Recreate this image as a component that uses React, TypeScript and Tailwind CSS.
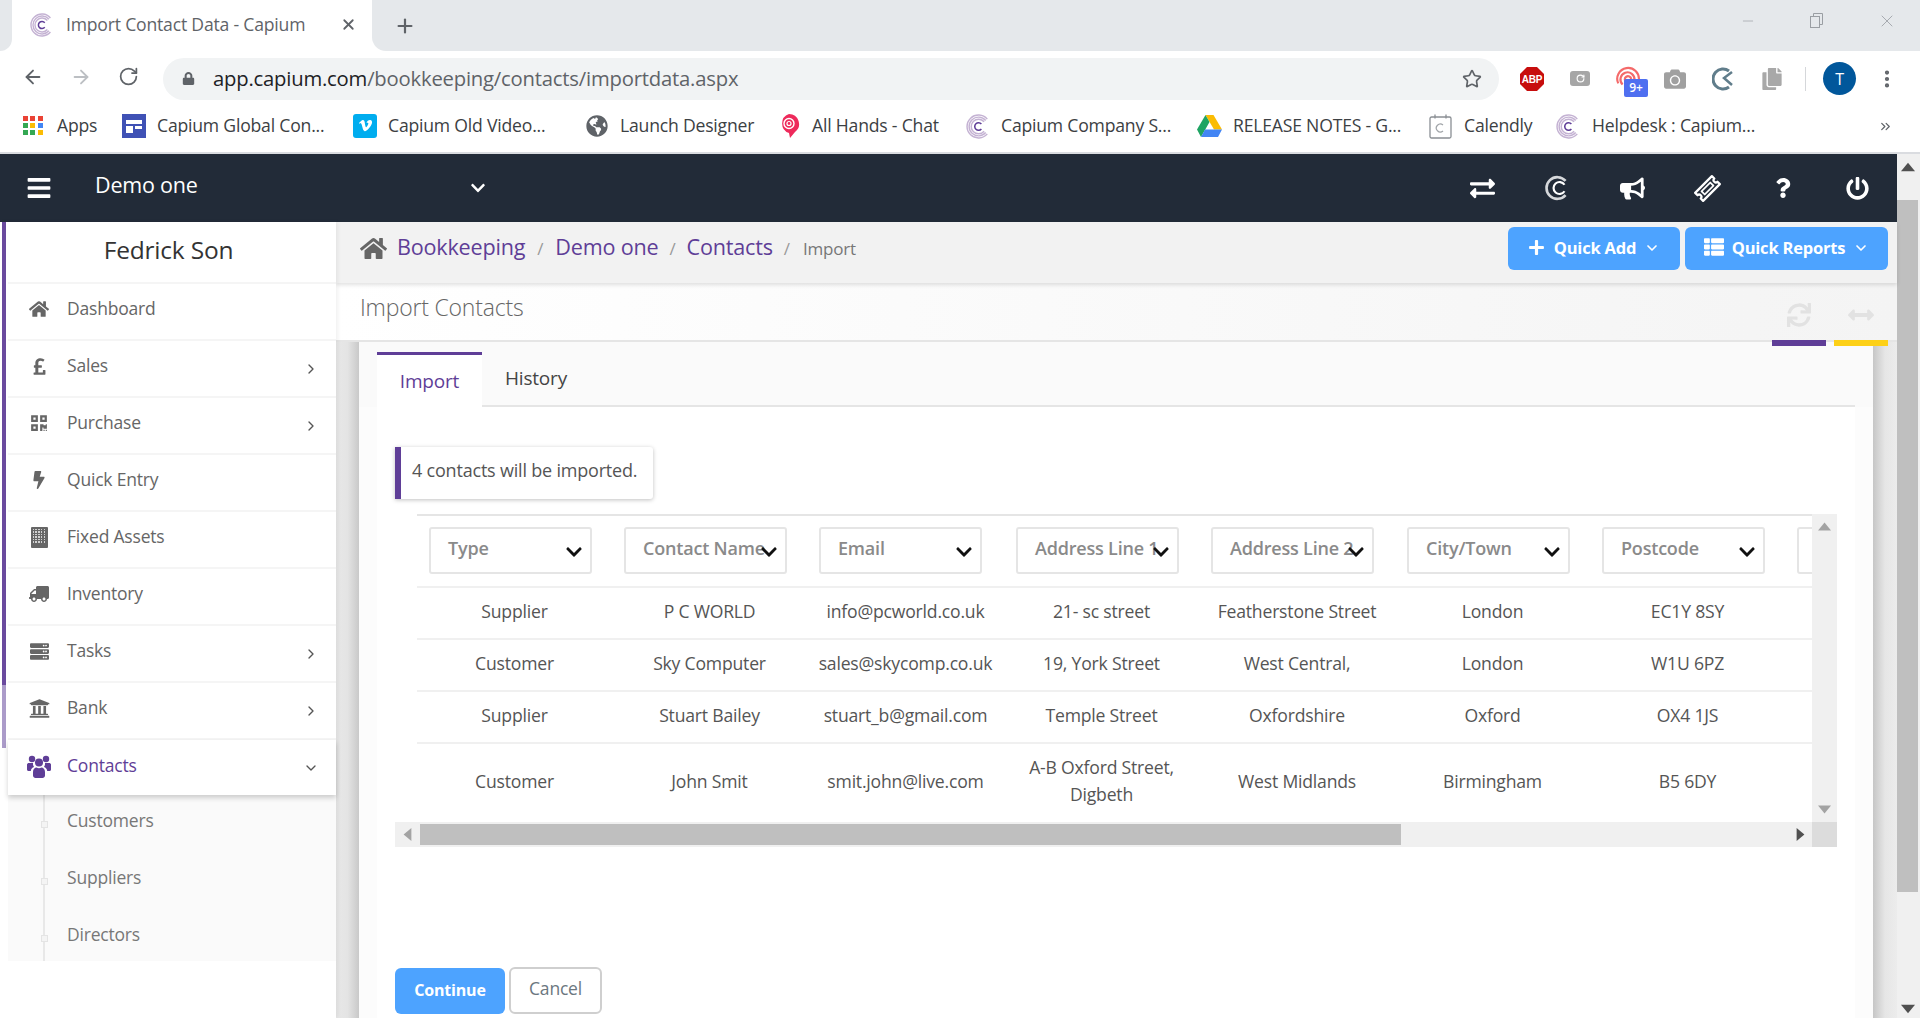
import React from 'react';
import {
  FaHome, FaPoundSign, FaQrcode, FaBolt, FaTruck, FaServer, FaUniversity, FaChevronDown,
  FaExchangeAlt, FaBullhorn, FaQuestion, FaPowerOff, FaPlus, FaThList, FaSync, FaArrowsAltH,
  FaLock, FaVimeoV, FaGlobeAmericas, FaCamera, FaCopy, FaBars,
} from 'react-icons/fa';
import { ArrowLeft, ArrowRight, RotateCw, Star, X, Plus, EllipsisVertical, ChevronRight, ChevronDown, Minus, ChevronsRight } from 'lucide-react';

function CLogo({ size = 24, outer = '#c4b2d3', inner = '#5f3e97' }: { size?: number; outer?: string; inner?: string }) {
  const arc = (r: number) => {
    const a = (40 * Math.PI) / 180;
    const x = 12 + r * Math.cos(a);
    const dy = r * Math.sin(a);
    return `M${x} ${12 - dy}A${r} ${r} 0 1 0 ${x} ${12 + dy}`;
  };
  return (
    <svg width={size} height={size} viewBox="0 0 24 24" fill="none" strokeLinecap="butt">
      <path d={arc(11)} stroke={outer} strokeWidth="1.4" />
      <path d={arc(9)} stroke={outer} strokeWidth="1.4" />
      <path d={arc(7)} stroke={outer} strokeWidth="1.4" />
      <path d={arc(3.6)} stroke={inner} strokeWidth="1.5" />
    </svg>
  );
}

function CWhite() {
  return (
    <svg width="26" height="28" viewBox="0 0 24 24" fill="none">
      <path d="M19 5.5A10 10 0 1 0 19 18.5" stroke="#d6d8db" strokeWidth="2.4" />
      <path d="M18 9A5.5 5.500 0 1 0 18 15" stroke="#ffffff" strokeWidth="2" />
    </svg>
  );
}

function Ticket() {
  return (
    <svg width="27" height="27" viewBox="0 0 24 24" fill="none" stroke="#fff" strokeWidth="2" strokeLinejoin="round">
      <g transform="rotate(-45 12 12)">
        <path d="M1.5 7h21v3a2 2 0 0 0 0 4v3h-21v-3a2 2 0 0 0 0-4z" />
        <rect x="6.5" y="10" width="11" height="4" strokeWidth="1.6" />
      </g>
    </svg>
  );
}

function Users() {
  return (
    <svg width="24" height="23" viewBox="0 0 24 23" fill="currentColor">
      <circle cx="5" cy="4" r="3.2" />
      <circle cx="19" cy="4" r="3.2" />
      <circle cx="12" cy="7.5" r="4" />
      <path d="M0 9.5c0-1 1-1.6 2-1.6h4a5.6 5.6 0 0 0 1 4.2c-1.7.6-3 2-3.2 3.9H2c-1 0-2-.6-2-1.6z" />
      <path d="M24 9.5c0-1-1-1.6-2-1.6h-4a5.6 5.6 0 0 1-1 4.2c1.7.6 3 2 3.2 3.9H22c1 0 2-.6 2-1.6z" />
      <path d="M6 17c0-2.6 1.8-4.4 3.5-4.4 1.5 1 3.5 1 5 0 1.7 0 3.5 1.8 3.5 4.4v3.5c0 1.4-1.2 2.5-2.5 2.5h-7C7.2 23 6 21.900 6 20.500z" />
    </svg>
  );
}

function AppsIcon() {
  const c = ['#ea4335', '#ea4335', '#ea4335', '#34a853', '#fbbc04', '#4285f4', '#34a853', '#34a853', '#fbbc04'];
  return (
    <div className="grid grid-cols-3 gap-[2px] w-[20px]">
      {c.map((k, i) => (
        <div key={i} className="w-[5px] h-[5px]" style={{ background: k }} />
      ))}
    </div>
  );
}

function Forms() {
  return (
    <svg width="24" height="24" viewBox="0 0 24 24">
      <rect width="24" height="24" fill="#3f51b5" />
      <rect x="4" y="6" width="16" height="4" fill="#fff" />
      <rect x="4" y="12" width="7" height="7" fill="#fff" />
      <rect x="13" y="12" width="7" height="3" fill="#fff" />
    </svg>
  );
}

function Balloon() {
  return (
    <svg width="22" height="26" viewBox="0 0 22 26">
      <path d="M11 1a10 10 0 0 1 6 18l-5 6-1-5A10 10 0 0 1 11 1z" fill="#ee2a5b" />
      <circle cx="11" cy="10.5" r="5" fill="none" stroke="#fff" strokeWidth="1.4" />
      <circle cx="11" cy="10.5" r="2" fill="none" stroke="#fff" strokeWidth="1.2" />
    </svg>
  );
}

function Drive() {
  return (
    <svg width="25" height="24" viewBox="0 0 25 24">
      <polygon points="8.5,1 16.5,1 25,15.5 17,15.5" fill="#fbbc04" />
      <polygon points="8.5,1 0,15.5 4,23 12.5,8" fill="#1fa463" />
      <polygon points="4,23 21,23 25,15.5 8,15.5" fill="#4285f4" />
    </svg>
  );
}

function Calendly() {
  return (
    <svg width="23" height="25" viewBox="0 0 23 25" fill="none">
      <rect x="1" y="3" width="21" height="21" rx="1.5" stroke="#8a8f94" strokeWidth="1.3" />
      <path d="M6 0.5v4M17 0.5v4" stroke="#8a8f94" strokeWidth="1.3" />
      <path d="M14 11a4 4 0 1 0 0 6" stroke="#a0a4a8" strokeWidth="1.2" />
    </svg>
  );
}

function Building() {
  const cells = Array.from({ length: 30 });
  return (
    <div className="relative w-[17px] h-[21px] bg-[#666] rounded-[1px] grid grid-cols-5 gap-[1px] p-[2px] content-start">
      {cells.map((_, i) => (
        <div key={i} className="w-[1.6px] h-[1.6px] bg-white/70" />
      ))}
    </div>
  );
}

function Bookmark({ w, iw = 'w-[35px]', icon, label }: { w: string; iw?: string; icon: React.ReactNode; label: string }) {
  return (
    <div className={`${w} shrink-0 flex items-center`}>
      <div className={`${iw} shrink-0 flex items-center`}>{icon}</div>
      <span className="whitespace-nowrap text-[17.6px] text-[#3c4043] -mt-[2px]">{label}</span>
    </div>
  );
}

function Tri({ dir, color, size = 10 }: { dir: 'up' | 'down' | 'left' | 'right'; color: string; size?: number }) {
  const pts = { up: '0,8 5,2 10,8', down: '0,2 10,2 5,8', left: '8,0 8,10 2,5', right: '2,0 2,10 8,5' }[dir];
  return (
    <svg width={size} height={size} viewBox="0 0 10 10">
      <polygon points={pts} fill={color} />
    </svg>
  );
}

const menu: { label: string; icon: React.ReactNode; more?: boolean }[] = [
  { label: 'Dashboard', icon: <FaHome size={20} /> },
  { label: 'Sales', icon: <FaPoundSign size={19} />, more: true },
  { label: 'Purchase', icon: <FaQrcode size={18} />, more: true },
  { label: 'Quick Entry', icon: <FaBolt size={18} /> },
  { label: 'Fixed Assets', icon: <Building /> },
  { label: 'Inventory', icon: <FaTruck size={20} className="-scale-x-100" /> },
  { label: 'Tasks', icon: <FaServer size={19} />, more: true },
  { label: 'Bank', icon: <FaUniversity size={21} />, more: true },
];

const colW = ['w-[195px]', 'w-[195px]', 'w-[197px]', 'w-[195px]', 'w-[196px]', 'w-[195px]', 'w-[195px]', 'w-[195px]'];
const heads = ['Type', 'Contact Name', 'Email', 'Address Line 1', 'Address Line 2', 'City/Town', 'Postcode', ''];
const rows: { h: string; c: React.ReactNode[] }[] = [
  { h: 'h-[52px]', c: ['Supplier', 'P C WORLD', 'info@pcworld.co.uk', '21- sc street', 'Featherstone Street', 'London', 'EC1Y 8SY'] },
  { h: 'h-[52px]', c: ['Customer', 'Sky Computer', 'sales@skycomp.co.uk', '19, York Street', 'West Central,', 'London', 'W1U 6PZ'] },
  { h: 'h-[52px]', c: ['Supplier', 'Stuart Bailey', 'stuart_b@gmail.com', 'Temple Street', 'Oxfordshire', 'Oxford', 'OX4 1JS'] },
  { h: 'h-[78px]', c: ['Customer', 'John Smit', 'smit.john@live.com', <>A-B Oxford Street,<br />Digbeth</>, 'West Midlands', 'Birmingham', 'B5 6DY'] },
];

export default function App() {
  return (
    <div className="w-[1920px] h-[1018px] overflow-hidden flex flex-col bg-white font-['Open_Sans',sans-serif] tracking-[-0.2px]">
      {/* tab strip */}
      <div className="h-[51px] shrink-0 flex bg-white">
        <div className="w-[12px] bg-[#e5e8eb] rounded-br-[14px]" />
        <div className="w-[360px] bg-white rounded-t-[14px] flex items-center pl-[18px] pr-[15px] pb-[2px]">
          <CLogo size={24} />
          <span className="ml-[12px] text-[17.6px] text-[#5f6368] whitespace-nowrap">Import Contact Data - Capium</span>
          <X size={17} strokeWidth={2.5} className="ml-auto text-[#5f6368]" />
        </div>
        <div className="flex-1 bg-[#e5e8eb] rounded-bl-[14px] flex items-center pl-[22px]">
          <Plus size={22} strokeWidth={2.4} className="text-[#5f6368]" />
          <div className="ml-auto flex items-center gap-[53px] pr-[23px] -mt-[10px] text-[#9a9ea3]">
            <Minus size={16} strokeWidth={1} />
            <svg width="15" height="15" viewBox="0 0 15 15" fill="none" stroke="#9a9ea3">
              <rect x="1.5" y="3.5" width="9" height="11" />
              <path d="M4.5 3.5v-3h9v11h-3" />
            </svg>
            <X size={20} strokeWidth={1} />
          </div>
        </div>
      </div>

      {/* address bar */}
      <div className="h-[51px] shrink-0 flex items-center">
        <div className="w-[163px] shrink-0 flex items-center pl-[22px] gap-[26px]">
          <ArrowLeft size={22} className="text-[#5f6368]" />
          <ArrowRight size={22} className="text-[#bcbfc3]" />
          <RotateCw size={21} className="text-[#5f6368]" />
        </div>
        <div className="w-[1336px] h-[42px] mt-[4px] rounded-full bg-[#f1f3f4] flex items-center pl-[19px] pr-[17px]">
          <FaLock size={13} className="text-[#5f6368]" />
          <span className="ml-[18px] text-[20.25px] text-[#5f6368] whitespace-nowrap">
            <span className="text-[#202124]">app.capium.com</span>/bookkeeping/contacts/importdata.aspx
          </span>
          <Star size={20} strokeWidth={2} className="ml-auto text-[#5f6368]" />
        </div>
        <div className="flex-1 flex items-center mt-[4px] pl-[20px]">
          <div className="w-[48px] flex">
            <svg width="26" height="26" viewBox="0 0 26 26">
              <polygon points="8,1 18,1 25,8 25,18 18,25 8,25 1,18 1,8" fill="#c70d0d" />
              <text x="13" y="17" textAnchor="middle" fontSize="10" fontWeight="700" fill="#fff" fontFamily="Liberation Sans">ABP</text>
            </svg>
          </div>
          <div className="w-[48px] flex">
            <div className="w-[20px] h-[15px] ml-[3px] rounded-[3px] bg-[#a6a6a6] flex items-center justify-center">
              <RotateCw size={9} strokeWidth={3} className="text-white" />
            </div>
          </div>
          <div className="w-[48px] flex relative">
            <svg width="26" height="26" viewBox="0 0 24 24" fill="none" stroke="#f46a6a" strokeWidth="2">
              <path d="M3 16A10 10 0 1 1 22 13" />
              <path d="M7 17A6.5 6.5 0 1 1 18 13" />
              <path d="M10.5 15A3 3 0 1 1 15 12" />
            </svg>
            <span className="absolute left-[9px] top-[13px] w-[24px] h-[18px] rounded-[2px] bg-[#4f6ff0] text-white text-[12px] font-semibold leading-[18px] text-center">9+</span>
          </div>
          <div className="w-[49px] flex pl-[1px]"><FaCamera size={22} className="text-[#a0a0a0]" /></div>
          <div className="w-[49px] flex">
            <svg width="22" height="24" viewBox="0 0 22 24" fill="none" stroke="#607d8b" strokeWidth="3">
              <path d="M17 4A10 10 0 1 0 17 20" />
              <path d="M20 5l-8 6 8 7" strokeWidth="2.5" />
            </svg>
          </div>
          <div className="w-[44px] flex justify-start"><FaCopy size={22} className="text-[#a8a8a8]" /></div>
          <div className="w-px h-[24px] bg-[#d5d7da]" />
          <div className="ml-[17px] w-[33px] h-[33px] rounded-full bg-[#01579b] text-white text-[16px] flex items-center justify-center">T</div>
          <EllipsisVertical size={22} strokeWidth={2.6} className="ml-[20px] text-[#5f6368]" />
        </div>
      </div>

      {/* bookmarks */}
      <div className="h-[52px] shrink-0 flex items-center pl-[23px] border-b-2 border-[#dadce0] pb-[2px]">
        <Bookmark w="w-[99px]" iw="w-[34px]" icon={<AppsIcon />} label="Apps" />
        <Bookmark w="w-[231px]" icon={<Forms />} label="Capium Global Con..." />
        <Bookmark w="w-[233px]" icon={<div className="w-[24px] h-[24px] rounded-[3px] bg-[#00adef] flex items-center justify-center"><FaVimeoV size={15} className="text-white" /></div>} label="Capium Old Video..." />
        <Bookmark w="w-[192px]" iw="w-[34px]" icon={<FaGlobeAmericas size={22} className="text-[#5f6368]" />} label="Launch Designer" />
        <Bookmark w="w-[188px]" iw="w-[34px]" icon={<Balloon />} label="All Hands - Chat" />
        <Bookmark w="w-[231px]" icon={<CLogo size={25} />} label="Capium Company S..." />
        <Bookmark w="w-[232px]" iw="w-[36px]" icon={<Drive />} label="RELEASE NOTES - G..." />
        <Bookmark w="w-[127px]" iw="w-[35px]" icon={<Calendly />} label="Calendly" />
        <Bookmark w="w-[300px]" iw="w-[36px]" icon={<CLogo size={25} />} label="Helpdesk : Capium..." />
        <ChevronsRight size={15} className="ml-[22px] text-[#5f6368]" />
      </div>

      {/* page */}
      <div className="flex-1 min-h-0 flex">
        <div className="w-[1897px] flex flex-col min-h-0">
          {/* navy bar */}
          <div className="h-[68px] shrink-0 bg-[#222b38] flex items-center text-white">
            <FaBars size={26} className="ml-[26px]" />
            <span className="ml-[43px] text-[21.5px] w-[375px] -mt-[5px]">Demo one</span>
            <FaChevronDown size={16} />
            <div className="ml-auto flex items-center pr-[2px]">
              <div className="w-[75px] flex justify-center"><FaExchangeAlt size={25} /></div>
              <div className="w-[75px] flex justify-center"><CWhite /></div>
              <div className="w-[75px] flex justify-center"><FaBullhorn size={25} /></div>
              <div className="w-[75px] flex justify-center"><Ticket /></div>
              <div className="w-[75px] flex justify-center"><FaQuestion size={20} /></div>
              <div className="w-[75px] flex justify-center"><FaPowerOff size={23} /></div>
            </div>
          </div>

          <div className="flex-1 min-h-0 flex">
            {/* sidebar */}
            <div className="w-[336px] shrink-0 flex bg-white z-10 shadow-[2px_0_4px_rgba(0,0,0,0.06)]">
              <div className="w-[8px] shrink-0 pl-[2px]">
                <div className="w-[4px] h-[463px] bg-[#6a4a9e]" />
                <div className="w-[4px] h-[63px] bg-[#ab9bc9]" />
              </div>
              <div className="flex-1 flex flex-col">
                <div className="h-[62px] shrink-0 flex items-center justify-center pb-[3px] pr-[7px] border-b-2 border-[#f5f5f5] text-[24.5px] text-[#333]">Fedrick Son</div>
                {menu.map((m) => (
                  <div key={m.label} className="h-[57px] shrink-0 flex items-center border-b-2 border-[#f5f5f5] text-[#666]">
                    <div className="w-[59px] shrink-0 flex justify-center pb-[5px] pl-[3px]">{m.icon}</div>
                    <span className="text-[17.5px] pb-[6px]">{m.label}</span>
                    {m.more && <ChevronRight size={16} className="ml-auto mr-[17px] text-[#555]" />}
                  </div>
                ))}
                <div className="h-[55px] shrink-0 flex items-center text-[#5f3e97] shadow-[0_3px_5px_rgba(0,0,0,0.18)] relative z-10 bg-white">
                  <div className="w-[59px] shrink-0 flex justify-center pb-[3px] pl-[3px]"><Users /></div>
                  <span className="text-[17.5px] pb-[5px]">Contacts</span>
                  <ChevronDown size={16} className="ml-auto mr-[17px] text-[#555]" />
                </div>
                <div className="relative h-[166px] shrink-0 bg-[#fafafa] text-[#777] text-[17.5px]">
                  <div className="absolute left-[35px] top-0 bottom-0 w-[2px] bg-[#e8e8e8]" />
                  {['Customers', 'Suppliers', 'Directors'].map((s) => (
                    <div key={s} className="h-[57px] flex items-center pl-[59px] pb-[6px] relative">
                      <div className="absolute left-[33px] top-[26px] w-[7px] h-[7px] border border-[#e4e4e4] bg-[#f4f4f4]" />
                      {s}
                    </div>
                  ))}
                </div>
              </div>
            </div>

            {/* main */}
            <div className="flex-1 min-w-0 flex flex-col bg-[#f2f2f2]">
              {/* breadcrumb */}
              <div className="h-[61px] shrink-0 flex items-center pl-[24px] pr-[9px] pb-[8px] bg-[#f2f2f2] shadow-[0_2px_4px_rgba(0,0,0,0.12)] relative z-[5]">
                <FaHome size={27} className="text-[#666]" />
                <div className="ml-[10px] flex items-baseline text-[21.6px] text-[#5f3e97] -mt-[2px]">
                  <span>Bookkeeping</span>
                  <span className="mx-[12px] text-[17px] text-[#999]">/</span>
                  <span>Demo one</span>
                  <span className="mx-[11px] text-[17px] text-[#999]">/</span>
                  <span>Contacts</span>
                  <span className="mx-[11px] text-[17px] text-[#999]">/</span>
                  <span className="ml-[2px] text-[17px] text-[#777]">Import</span>
                </div>
                <div className="ml-auto flex gap-[5px] text-white text-[16.5px] font-bold">
                  <div className="w-[172px] h-[43px] rounded-[6px] bg-[#4da3ff] flex items-center justify-center">
                    <FaPlus size={17} className="-mt-[3px]" />
                    <span className="ml-[9px]">Quick Add</span>
                    <ChevronDown size={16} strokeWidth={2.5} className="ml-[8px] -mt-[2px]" />
                  </div>
                  <div className="w-[203px] h-[43px] rounded-[6px] bg-[#4da3ff] flex items-center justify-center">
                    <FaThList size={20} className="-mt-[3px]" />
                    <span className="ml-[8px]">Quick Reports</span>
                    <ChevronDown size={16} strokeWidth={2.5} className="ml-[8px] -mt-[2px]" />
                  </div>
                </div>
              </div>

              {/* title */}
              <div className="relative z-[4] h-[59px] shrink-0 flex items-center pl-[24px] border-b-2 border-[#e5e5e5] bg-gradient-to-r from-white to-[#f4f4f4]">
                <span className="text-[23px] font-light text-[#666] -mt-[8px]">Import Contacts</span>
                <div className="ml-auto flex items-center text-[#e2e2e2] translate-y-[3px]">
                  <div className="w-[37px] flex justify-center mr-[26px]"><FaSync size={24} /></div>
                  <div className="w-[36px] flex justify-center mr-[18px]"><FaArrowsAltH size={26} /></div>
                </div>
                <div className="absolute -bottom-[6px] right-[71px] w-[54px] h-[6px] bg-[#5f3e97]" />
                <div className="absolute -bottom-[6px] right-[9px] w-[54px] h-[6px] bg-[#fdd017]" />
              </div>

              {/* body */}
              <div className="flex-1 min-h-0 flex">
                <div className="w-[23px] shrink-0 bg-gradient-to-r from-[#e8e8e8] via-[#e4e4e4] to-[#c9c9c9]" />
                <div className="w-[1514px] shrink-0 bg-[#fcfcfc] px-[18px] flex flex-col">
                  <div className="h-[65px] shrink-0 -mx-[18px] px-[18px] bg-[#fafafa] relative">
                    <div className="h-[65px] flex items-end border-b-2 border-[#e5e5e5] -mb-px">
                      <div className="w-[105px] h-[55px] -mb-[2px] border-t-[3px] border-[#5f3e97] bg-white text-[#5f3e97] text-[19px] flex items-center justify-center">Import</div>
                      <div className="ml-[23px] h-[53px] text-[#444] text-[19px] flex items-center">History</div>
                    </div>
                  </div>
                  <div className="flex-1 bg-white pl-[18px]">
                    <div className="mt-[40px] w-[258px] h-[52px] border-l-[6px] border-[#5f3e97] rounded-r-[3px] bg-white shadow-[0_1px_4px_rgba(0,0,0,0.25)] flex items-center pl-[11px] pb-[5px] text-[18px] text-[#555]">4 contacts will be imported.</div>
                    <div className="mt-[15px] w-[1442px] flex flex-col">
                      <div className="flex h-[308px]">
                        <div className="w-[1417px] pl-[22px] overflow-hidden">
                          <div className="w-[1560px] border-t-2 border-[#e5e5e5]">
                            <div className="h-[72px] flex border-b-2 border-[#f0f0f0]">
                              {heads.map((h, i) => (
                                <div key={i} className={`${colW[i]} shrink-0 pl-[12px] pt-[11px]`}>
                                  <div className="relative w-[163px] h-[47px] border-2 border-[#e5e5e5] rounded-[3px] pl-[17px] text-[18px] font-semibold text-[#8a8a8a] flex items-center pb-[4px] whitespace-nowrap overflow-visible">
                                    {h}
                                    <FaChevronDown size={18} className="absolute right-[7px] top-[14px] text-[#111]" />
                                  </div>
                                </div>
                              ))}
                            </div>
                            {rows.map((r, i) => (
                              <div key={i} className={`${r.h} flex items-center ${i < 3 ? 'border-b-2 border-[#f0f0f0]' : ''} text-[17.6px] text-[#555]`}>
                                {r.c.map((t, j) => (
                                  <div key={j} className={`${colW[j]} shrink-0 text-center leading-[27px] pb-[4px]`}>{t}</div>
                                ))}
                              </div>
                            ))}
                          </div>
                        </div>
                        <div className="w-[25px] bg-[#f0f0f0] flex flex-col items-center justify-between py-[6px]">
                          <Tri dir="up" color="#a3a3a3" size={13} />
                          <Tri dir="down" color="#a3a3a3" size={13} />
                        </div>
                      </div>
                      <div className="flex h-[25px] bg-[#f0f0f0]">
                        <div className="w-[25px] flex items-center justify-center"><Tri dir="left" color="#a3a3a3" size={13} /></div>
                        <div className="w-[981px] h-[21px] mt-[2px] bg-[#bfbfbf]" />
                        <div className="flex-1 flex items-center justify-end pr-[5px]"><Tri dir="right" color="#505050" size={13} /></div>
                        <div className="w-[25px] bg-[#dcdcdc]" />
                      </div>
                    </div>
                    <div className="mt-[120px] flex items-center gap-[4px]">
                      <div className="w-[110px] h-[46px] rounded-[6px] bg-[#4da3ff] text-white text-[16px] font-bold flex items-center justify-center pb-[2px]">Continue</div>
                      <div className="w-[93px] h-[47px] rounded-[6px] border-2 border-[#cfcfcf] bg-white text-[#6b7780] text-[17.5px] flex items-center justify-center pb-[4px]">Cancel</div>
                    </div>
                  </div>
                </div>
                <div className="flex-1 bg-gradient-to-r from-[#c6c6c6] via-[#e6e6e6] to-[#ececec]" />
              </div>
            </div>
          </div>
        </div>

        {/* page scrollbar */}
        <div className="w-[23px] shrink-0 bg-[#f0f0f0] flex flex-col">
          <div className="h-[46px] shrink-0 flex items-start justify-center pt-[6px] pr-[2px]"><Tri dir="up" color="#505050" size={14} /></div>
          <div className="w-[21px] h-[692px] shrink-0 bg-[#bfbfbf]" />
          <div className="flex-1 flex items-end justify-center pb-[2px] pr-[2px]"><Tri dir="down" color="#505050" size={14} /></div>
        </div>
      </div>
    </div>
  );
}
